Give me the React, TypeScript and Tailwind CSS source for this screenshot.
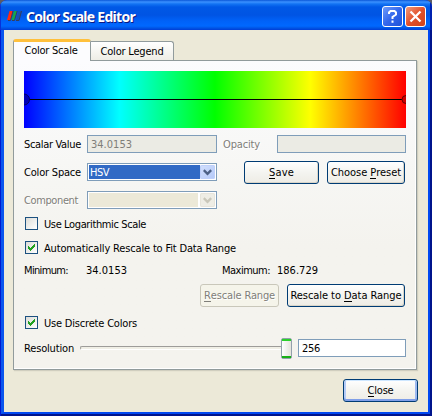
import React, { useLayoutEffect, useRef, useState } from "react";

type LabelProps = {
  children: string;
  width: number;
  mnemonic?: number;
  className?: string;
};

// A single-line label whose tracking is adjusted to fill the given width.
function Label({ children, width, mnemonic = -1, className = "translate-y-px" }: LabelProps) {
  const ref = useRef<HTMLSpanElement>(null);
  const [tracking, setTracking] = useState(0);
  useLayoutEffect(() => {
    if (ref.current) {
      setTracking((width - ref.current.getBoundingClientRect().width) / children.length);
    }
  }, []);
  return (
    <span ref={ref} className={`inline-block shrink-0 whitespace-pre leading-[14px] ${className}`} style={{ letterSpacing: tracking }}>
      {mnemonic < 0 ? (
        children
      ) : (
        <>
          {children.slice(0, mnemonic)}
          <span className="inline-block h-[13px] border-b border-current">{children[mnemonic]}</span>
          {children.slice(mnemonic + 1)}
        </>
      )}
    </span>
  );
}

const etched = "text-[#7f7e79] [text-shadow:1px_1px_0_#fff]";

function PushButton({ className, children }: { className: string; children: React.ReactNode }) {
  return (
    <button
      className={`flex h-[23px] shrink-0 items-center justify-center rounded-[3px] border border-[#003c74] bg-linear-to-b from-white via-[#f4f4f0] to-[#eeece5] ${className}`}
    >
      {children}
    </button>
  );
}

const raised = "shadow-[inset_-1px_-1px_0_#d9d5c9]";

function CheckRow({ checked, text, width, className }: { checked: boolean; text: string; width: number; className: string }) {
  return (
    <label className={`flex h-[13px] items-center pl-px ${className}`}>
      <span className="mr-[6px] h-[13px] w-[13px] shrink-0 border border-[#1c5180] bg-linear-to-br from-[#dcdcd7] to-white">
        {checked && (
          <svg width="11" height="11" viewBox="0 0 11 11" shapeRendering="crispEdges">
            <path d="M2 4h1v1h1v1h1v-1h1v-1h1v-1h1v-1h1v3h-1v1h-1v1h-1v1h-1v1h-1v-1h-1v-1h-1z" fill="#21a121" />
          </svg>
        )}
      </span>
      <Label width={width}>{text}</Label>
    </label>
  );
}

function Chevron({ disabled }: { disabled?: boolean }) {
  return (
    <span
      className={`flex h-[14px] w-[15px] shrink-0 items-center justify-center rounded-[2px] ${
        disabled ? "bg-[#eeede5] shadow-[inset_0_0_0_1px_#e6e4da]" : "bg-linear-to-br from-[#d3e0fd] to-[#b3c8f8] shadow-[inset_0_0_0_1px_#bfd0fa]"
      }`}
    >
      <svg width="9" height="7" viewBox="0 0 9 7">
        <path d="M.8 1.2l3.7 3.6 3.7-3.6" fill="none" stroke={disabled ? "#c9c7ba" : "#4d6185"} strokeWidth="2.4" />
      </svg>
    </span>
  );
}

export default function App() {
  return (
    <div className="h-[416px] w-[432px] overflow-hidden bg-[#5c5c64] font-['DejaVu_Sans_Condensed','DejaVu_Sans',sans-serif] text-[11px] text-black">
      <div className="flex h-full flex-col overflow-hidden rounded-t-[7px] bg-[#0019cf]">
        <header className="flex h-[30px] shrink-0 items-center bg-[linear-gradient(to_bottom,#0a57d8_0,#3b91ff_2px,#1273f3_4px,#0058e6_7px,#0054e3_15px,#0062f8_21px,#0068ff_26px,#0055e5_28px,#003dd7_30px)] pl-[7px] pr-[6px] shadow-[inset_1px_0_0_#0831d9,inset_-2px_0_0_#0022b0]">
          <svg width="15" height="11" viewBox="0 0 15 11" className="mt-[2px]">
            <path d="M2.5 0h3.5L3.5 9H0z" fill="#ff2a10" />
            <path d="M7 0h3.2L7.5 9H4.5z" fill="#15a84a" />
            <path d="M11.5 0h3l-2.5 9h-3z" fill="#1c50b0" />
            <path d="M6 0L3.5 9.5H1M10.2 0L7.5 9.5H5M14.5 0L12 9.5H9" stroke="#353f5c" fill="none" />
          </svg>
          <h1 className="ml-1 mt-[4px] flex flex-1 font-['Noto_Sans',sans-serif] text-[14px] font-bold text-white [text-shadow:1px_1px_0_#0a1883]">
            <Label width={109} className="">Color Scale Editor</Label>
          </h1>
          <div className="mt-[3px] flex gap-[2px]">
            <button className="flex h-[21px] w-[21px] items-center justify-center rounded-[3px] border border-white bg-linear-to-br from-[#6f9bfa] via-[#3467ec] to-[#1e51d8]">
              <svg width="11" height="13" viewBox="0 0 11 13">
                <path d="M2 4V2.5L3.5 1H7.5L9 2.5V4.5L5.5 7V9M5.5 10.5V12.7" fill="none" stroke="#fff" strokeWidth="2" />
              </svg>
            </button>
            <button className="flex h-[21px] w-[21px] items-center justify-center rounded-[3px] border border-white bg-linear-to-br from-[#f09878] via-[#e2502a] to-[#d2441a]">
              <svg width="13" height="13" viewBox="0 0 13 13">
                <path d="M1.5 1.5l10 10M11.5 1.5l-10 10" stroke="#fff" strokeWidth="2.3" />
              </svg>
            </button>
          </div>
        </header>

        <div className="mb-[2px] ml-px mr-[2px] flex min-h-0 flex-1 border-b-2 border-l-[3px] border-r-2 border-b-[#0048f1] border-l-[#0a55ee] border-r-[#0048f1] bg-[#ece9d8] shadow-[0_2px_0_#00148c,2px_0_0_#00148c,2px_2px_0_#00148c]">
          <main className="flex w-full flex-col pl-[9px] pt-[9px]">
            <nav className="z-10 -mb-px flex h-[22px] items-end">
              <div className="flex h-[22px] w-[78px] justify-center rounded-t-[3px] border-x border-t-[3px] border-x-[#919b9c] border-t-[#ffc03c] bg-[#fcfcfe] pr-[2px] pt-px">
                <Label width={53}>Color Scale</Label>
              </div>
              <div className="mb-px flex h-[19px] w-[83px] justify-center rounded-tr-[3px] border-r border-t border-[#919b9c] bg-linear-to-b from-white to-[#eeede5] pt-[2px]">
                <Label width={63}>Color Legend</Label>
              </div>
            </nav>

            <section className="flex h-[310px] w-[404px] flex-col border border-[#919b9c] bg-linear-to-b from-[#fcfcfe] via-[#f6f6f3] via-40% to-[#f4f3ee] to-60% pl-[10px] pr-[10px] shadow-[1px_1px_1px_#d0cebf,inset_-1px_-1px_0_#fff]">
              <svg className="mt-[10px] h-[57px] w-[382px] shrink-0" viewBox="0 0 382 57">
                <defs>
                  <linearGradient id="hsv">
                    <stop offset="0" stopColor="#00f" />
                    <stop offset=".25" stopColor="#0ff" />
                    <stop offset=".5" stopColor="#0f0" />
                    <stop offset=".75" stopColor="#ff0" />
                    <stop offset="1" stopColor="#f00" />
                  </linearGradient>
                </defs>
                <rect width="382" height="57" fill="url(#hsv)" />
                <path d="M0 28.5H382" stroke="#000" />
                <circle cx="0" cy="28.5" r="5.5" fill="#0000b8" stroke="#000064" />
                <circle cx="382" cy="28.5" r="4" fill="#d00000" stroke="#640000" />
              </svg>

              <div className="mt-[7px] flex h-[18px] shrink-0 items-center">
                <Label width={57}>Scalar Value</Label>
                <div className="ml-[6px] flex h-[18px] w-[130px] items-center border border-[#7f9db9] bg-[#ebebe4] pl-[3px] text-[#7f7e79]">
                  <Label width={41}>34.0153</Label>
                </div>
                <div className="ml-[6px] flex w-[54px]">
                  <Label width={37} className={`translate-y-px ${etched}`}>Opacity</Label>
                </div>
                <div className="h-[18px] w-[129px] border border-[#7f9db9] bg-[#ebebe4]" />
              </div>

              <div className="mt-[8px] flex h-[23px] shrink-0 items-center">
                <Label width={57} className="">Color Space</Label>
                <div className="-mt-px ml-[6px] flex h-[18px] w-[130px] items-center justify-between border border-[#7f9db9] bg-white px-px">
                  <div className="flex h-[14px] w-[111px] items-center bg-[#316ac5] pl-px text-white">
                    <Label width={19}>HSV</Label>
                  </div>
                  <Chevron />
                </div>
                <PushButton className={`ml-[27px] w-[75px] ${raised}`}>
                  <Label width={25} mnemonic={0} className="">Save</Label>
                </PushButton>
                <PushButton className={`ml-[8px] w-[78px] ${raised}`}>
                  <Label width={70} mnemonic={7} className="">Choose Preset</Label>
                </PushButton>
              </div>

              <div className="mt-[7px] flex h-[18px] shrink-0 items-center">
                <div className="flex w-[63px]">
                  <Label width={54} className={`translate-y-px ${etched}`}>Component</Label>
                </div>
                <div className="flex h-[18px] w-[130px] items-center border border-[#7f9db9] bg-white p-px">
                  <div className="mr-[2px] h-[14px] w-[111px] bg-[#ece9d8]" />
                  <Chevron disabled />
                </div>
              </div>

              <CheckRow checked={false} text="Use Logarithmic Scale" width={102} className="mt-[8px]" />
              <CheckRow checked text="Automatically Rescale to Fit Data Range" width={192} className="mt-[11px]" />

              <div className="mt-[9px] flex h-[14px] shrink-0 items-center">
                <div className="flex w-[62px]">
                  <Label width={44}>Minimum:</Label>
                </div>
                <div className="flex w-[136px]">
                  <Label width={41}>34.0153</Label>
                </div>
                <div className="flex w-[55px]">
                  <Label width={48}>Maximum:</Label>
                </div>
                <Label width={41}>186.729</Label>
              </div>

              <div className="mt-[7px] flex h-[23px] shrink-0 gap-[8px] pl-[176px]">
                <button className={`flex h-[23px] w-[79px] items-center justify-center rounded-[3px] border border-[#c9c7ba] bg-[#f5f4ea] ${etched}`}>
                  <Label width={71} mnemonic={0} className="">Rescale Range</Label>
                </button>
                <PushButton className={`w-[118px] ${raised}`}>
                  <Label width={111} mnemonic={11} className="">Rescale to Data Range</Label>
                </PushButton>
              </div>

              <CheckRow checked text="Use Discrete Colors" width={93} className="mt-[9px]" />

              <div className="mt-[9px] flex h-[21px] shrink-0 items-center">
                <Label width={50} className="">Resolution</Label>
                <div className="ml-[6px] mt-[-2px] h-[4px] w-[201px] rounded-l-[2px] border-y border-l border-b-white border-l-[#9d9c99] border-t-[#9d9c99] bg-[#f0efe6]" />
                <div className="flex h-[21px] w-[11px] flex-col justify-between rounded-[2px] border border-[#92a0ab] bg-linear-to-r from-white to-[#e4e3dc]">
                  <div className="h-[2px] bg-[#2ad02a]" />
                  <div className="h-[2px] bg-[#18b018]" />
                </div>
                <div className="-mt-px ml-[6px] flex h-[18px] w-[108px] items-center border border-[#7f9db9] bg-white pl-[3px]">
                  <Label width={18}>256</Label>
                </div>
              </div>
            </section>

            <PushButton className="ml-[330px] mt-[9px] w-[75px] shadow-[inset_0_1px_0_#cee7ff,inset_0_-2px_0_#7f9fe8,inset_2px_0_0_#b4cbf7,inset_-2px_0_0_#9db9f0]">
              <Label width={26} mnemonic={0} className="">Close</Label>
            </PushButton>
          </main>
        </div>
      </div>
    </div>
  );
}
